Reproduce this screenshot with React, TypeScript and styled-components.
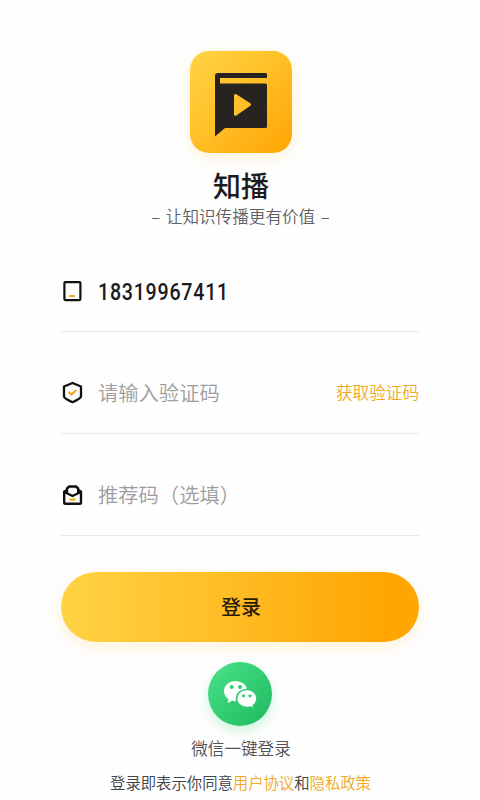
import React from "react";
import styled, { createGlobalStyle } from "styled-components";

const GlobalStyle = createGlobalStyle`
  * { box-sizing: border-box; }
  body {
    margin: 0;
    background: #fefefe;
    font-family: "Noto Sans CJK SC", sans-serif;
  }
`;

const Page = styled.main`
  width: 480px;
  height: 800px;
  padding: 51px 61px 0;
  display: flex;
  flex-direction: column;
  align-items: center;
  overflow: hidden;
  background: #fefefe;
`;

const LogoTile = styled.div`
  width: 102px;
  height: 102px;
  flex: none;
  margin-left: 1px;
  border-radius: 19px;
  background: linear-gradient(135deg, #ffd345 0%, #ffbe25 50%, #ffa503 100%);
  box-shadow: 0 4px 16px rgba(255, 190, 50, 0.2);
  svg { display: block; }
`;

const Title = styled.h1`
  margin: 12px 0 0 2px;
  height: 40px;
  line-height: 40px;
  font-size: 28px;
  font-weight: 500;
  color: #1d1b20;
`;

const Slogan = styled.p`
  margin: -1px 0 0 1px;
  height: 24px;
  line-height: 24px;
  font-size: 16.6px;
  font-weight: 350;
  word-spacing: 2px;
  color: #605f64;
  white-space: pre;
`;

const Form = styled.form`
  width: 358px;
  margin-top: 26px;
  display: flex;
  flex-direction: column;
`;

const Field = styled.label<{ $height: number }>`
  height: ${(p) => p.$height}px;
  padding-bottom: 20px;
  display: flex;
  align-items: flex-end;
  border-bottom: 1px solid #e9e8ec;
`;

const FieldRow = styled.span`
  width: 100%;
  height: 40px;
  display: flex;
  align-items: center;
`;

const FieldIcon = styled.svg`
  width: 24px;
  height: 24px;
  flex: none;
  margin-right: 13px;
`;

const TextInput = styled.input<{ $phone?: boolean }>`
  min-width: 0;
  flex: 1;
  height: 36px;
  padding: ${(p) => (p.$phone ? "1px 0 0" : "0 0 2px")};
  border: 0;
  outline: 0;
  background: transparent;
  color: #1b1a1e;
  font-family: ${(p) => (p.$phone ? "Roboto" : '"Noto Sans CJK SC"')}, sans-serif;
  font-size: ${(p) => (p.$phone ? 23.5 : 20.3)}px;
  font-weight: ${(p) => (p.$phone ? 500 : 350)};
  ${(p) => p.$phone && "transform: scaleX(0.835); transform-origin: left; letter-spacing: 0.9px;"}
  &::placeholder { color: #9d9ca1; opacity: 1; }
`;

const CodeButton = styled.button`
  padding: 0 0 2px;
  border: 0;
  background: none;
  color: #f0a91c;
  font: 350 16.6px/24px "Noto Sans CJK SC", sans-serif;
`;

const LoginButton = styled.button`
  height: 70px;
  margin-top: 36px;
  padding: 0 0 0 2px;
  border: 0;
  border-radius: 35px;
  background: linear-gradient(90deg, #ffd345 0%, #ffbb22 50%, #ffa602 90%);
  box-shadow: 0 5px 16px rgba(255, 190, 50, 0.18);
  color: #2a1d08;
  font: 500 20px/30px "Noto Sans CJK SC", sans-serif;
`;

const WechatButton = styled.button`
  width: 64px;
  height: 64px;
  flex: none;
  margin-top: 20px;
  padding: 0;
  border: 0;
  border-radius: 50%;
  background: linear-gradient(135deg, #4be28b 0%, #33cd73 50%, #20b85e 100%);
  box-shadow: 0 5px 12px rgba(60, 215, 125, 0.25);
  svg { display: block; }
`;

const WechatLabel = styled.p`
  margin: 10px 0 0 2px;
  line-height: 24px;
  font-size: 16.6px;
  font-weight: 350;
  color: #525156;
`;

const Terms = styled.p`
  margin: 10px 0 0 1px;
  line-height: 24px;
  font-size: 15.35px;
  font-weight: 350;
  color: #424146;
  white-space: nowrap;
`;

const TermsLink = styled.a`
  color: #f2a81c;
`;

export default function App() {
  return (
    <>
      <GlobalStyle />
      <Page>
        <LogoTile>
          <svg width="102" height="102" viewBox="0 0 102 102" fill="#272320">
            <path
              fillRule="evenodd"
              d="M28 22H75.5Q77 22 77 23.5V27H30V32.5H75.5Q77 32.5 77 34V75.5Q77 77 75.5 77H35L25 85.500V25Q25 22 28 22Z"
            />
            <path
              d="M45.500 44.600L59.500 53.500L45.500 63.300Z"
              fill="#ffc02a"
              stroke="#ffc02a"
              strokeWidth="3"
              strokeLinejoin="round"
            />
          </svg>
        </LogoTile>
        <Title>知播</Title>
        <Slogan>– 让知识传播更有价值 –</Slogan>

        <Form>
          <Field $height={78}>
            <FieldRow>
              <FieldIcon viewBox="0 0 24 24" fill="none">
                <rect x="3.400" y="3.100" width="16" height="18" rx="1" stroke="#111" strokeWidth="2.200" />
                <path d="M8.300 17H14" stroke="#f0a91c" strokeWidth="2" />
              </FieldIcon>
              <TextInput $phone type="tel" defaultValue="18319967411" aria-label="手机号" />
            </FieldRow>
          </Field>
          <Field $height={102}>
            <FieldRow>
              <FieldIcon viewBox="0 0 24 24" fill="none">
                <path
                  d="M11.500 2L20 5.500V15.500Q19.500 17.700 11.500 21.200Q3.500 17.700 3 15.500V5.500Z"
                  stroke="#111"
                  strokeWidth="2.300"
                  strokeLinejoin="round"
                />
                <path d="M7.600 11L10.500 13.500L15.300 9" stroke="#f0a91c" strokeWidth="2.200" />
              </FieldIcon>
              <TextInput placeholder="请输入验证码" />
              <CodeButton type="button">获取验证码</CodeButton>
            </FieldRow>
          </Field>
          <Field $height={102}>
            <FieldRow>
              <FieldIcon viewBox="0 0 24 24" fill="none">
                <path
                  d="M6 7L3.200 8.500V19.500Q3.200 20.800 4.500 20.800H18.700Q20 20.800 20 19.500V8.500L17.200 7M3.500 9L11.500 13L19.800 9M6 9.500V5.500L8.200 3.500H15L17.200 5.500V9.500"
                  stroke="#111"
                  strokeWidth="2.400"
                  strokeLinejoin="round"
                />
                <path d="M8.500 16.600H14.500" stroke="#e9b51c" strokeWidth="2.400" />
              </FieldIcon>
              <TextInput placeholder="推荐码（选填）" />
            </FieldRow>
          </Field>
          <LoginButton type="button">登录</LoginButton>
        </Form>

        <WechatButton type="button" aria-label="微信">
          <svg width="64" height="64" viewBox="0 0 64 64">
            <path
              d="M27.500 19C21 19 16 23.600 16 29.300C16 32.600 17.600 35.300 20.500 37.200L19.600 41L24 38.800Q27 39.500 30 38.900C40 37 41.500 26 35.500 21.500Q32 19 27.500 19Z"
              fill="#fff"
            />
            <path
              d="M38.800 27.500C32.800 27.500 28.500 31.500 28.500 36.500C28.500 41.500 33 45.500 39 45.500Q41 45.500 42.700 45L46 47L45.200 43.500C47.700 41.900 49 39.400 49 36.500C49 31.500 44.500 27.500 38.800 27.500Z"
              fill="#fff"
              stroke="#32cb71"
              strokeWidth="1.600"
            />
            <g fill="#32cb71">
              <circle cx="23.700" cy="25" r="2" />
              <circle cx="32" cy="25" r="2" />
              <circle cx="35.500" cy="33.800" r="1.600" />
              <circle cx="42" cy="33.800" r="1.600" />
            </g>
          </svg>
        </WechatButton>
        <WechatLabel>微信一键登录</WechatLabel>
        <Terms>
          登录即表示你同意<TermsLink>用户协议</TermsLink>和<TermsLink>隐私政策</TermsLink>
        </Terms>
      </Page>
    </>
  );
}
